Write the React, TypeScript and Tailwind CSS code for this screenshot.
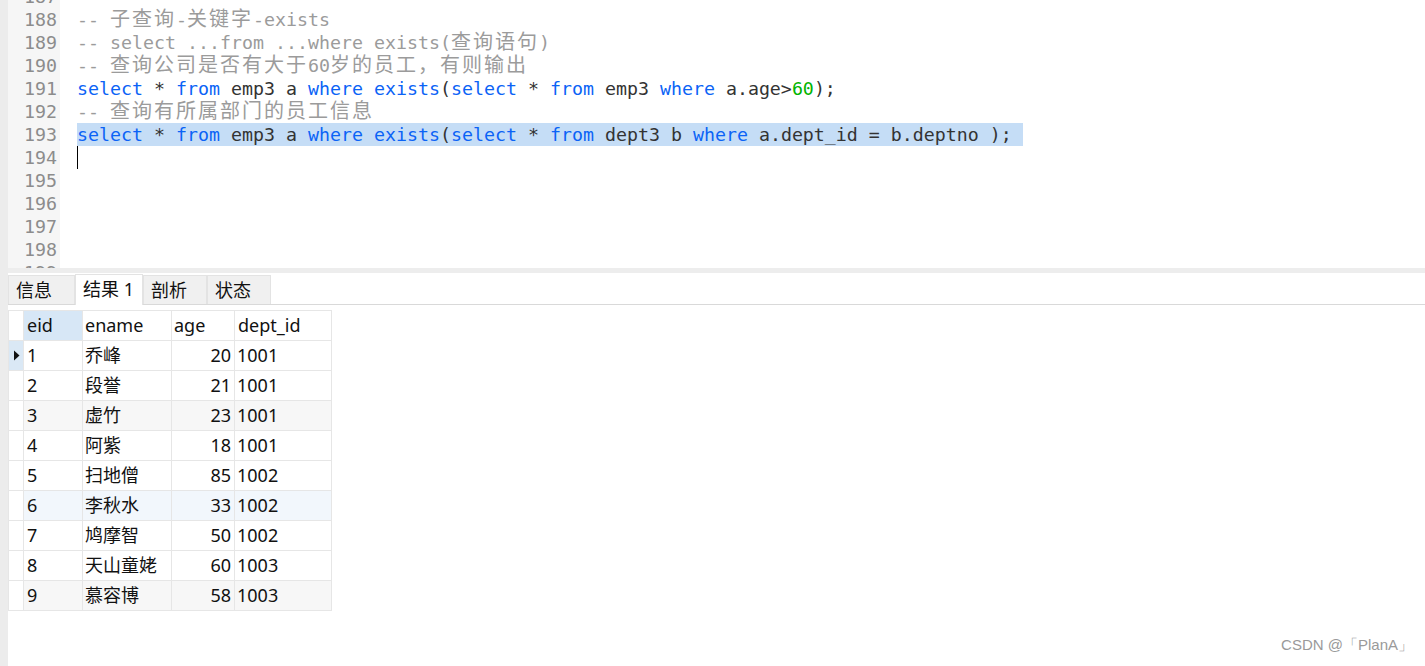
import React from "react";

type Tok = { t: string; c?: "kw" | "id" | "cm" | "num"; cjk?: boolean };

const color = {
  kw: "text-[#0b63f6]",
  id: "text-[#333333]",
  cm: "text-[#9b9b9b]",
  num: "text-[#00b400]",
};

// split a comment string into ascii / cjk pieces
function comment(s: string): Tok[] {
  const out: Tok[] = [];
  const re = /([\u3000-\u9fff\uff00-\uffef]+)|([^\u3000-\u9fff\uff00-\uffef]+)/g;
  let m;
  while ((m = re.exec(s))) {
    if (m[1]) out.push({ t: m[1], c: "cm", cjk: true });
    else out.push({ t: m[2], c: "cm" });
  }
  return out;
}

const lines: { n: number; toks: Tok[]; sel?: boolean }[] = [
  { n: 187, toks: [] },
  { n: 188, toks: comment("-- 子查询-关键字-exists") },
  { n: 189, toks: comment("-- select ...from ...where exists(查询语句)") },
  { n: 190, toks: comment("-- 查询公司是否有大于60岁的员工，有则输出") },
  {
    n: 191,
    toks: [
      { t: "select", c: "kw" },
      { t: " * ", c: "id" },
      { t: "from", c: "kw" },
      { t: " emp3 a ", c: "id" },
      { t: "where", c: "kw" },
      { t: " ", c: "id" },
      { t: "exists", c: "kw" },
      { t: "(", c: "id" },
      { t: "select", c: "kw" },
      { t: " * ", c: "id" },
      { t: "from", c: "kw" },
      { t: " emp3 ", c: "id" },
      { t: "where", c: "kw" },
      { t: " a.age>", c: "id" },
      { t: "60", c: "num" },
      { t: ");", c: "id" },
    ],
  },
  { n: 192, toks: comment("-- 查询有所属部门的员工信息") },
  {
    n: 193,
    sel: true,
    toks: [
      { t: "select", c: "kw" },
      { t: " * ", c: "id" },
      { t: "from", c: "kw" },
      { t: " emp3 a ", c: "id" },
      { t: "where", c: "kw" },
      { t: " ", c: "id" },
      { t: "exists", c: "kw" },
      { t: "(", c: "id" },
      { t: "select", c: "kw" },
      { t: " * ", c: "id" },
      { t: "from", c: "kw" },
      { t: " dept3 b ", c: "id" },
      { t: "where", c: "kw" },
      { t: " a.dept_id = b.deptno ); ", c: "id" },
    ],
  },
  { n: 194, toks: [] },
  { n: 195, toks: [] },
  { n: 196, toks: [] },
  { n: 197, toks: [] },
  { n: 198, toks: [] },
  { n: 199, toks: [] },
];

const rows = [
  ["1", "乔峰", "20", "1001"],
  ["2", "段誉", "21", "1001"],
  ["3", "虚竹", "23", "1001"],
  ["4", "阿紫", "18", "1001"],
  ["5", "扫地僧", "85", "1002"],
  ["6", "李秋水", "33", "1002"],
  ["7", "鸠摩智", "50", "1002"],
  ["8", "天山童姥", "60", "1003"],
  ["9", "慕容博", "58", "1003"],
];

const mono = "font-['DejaVu_Sans_Mono','Liberation_Mono',monospace] text-[18.27px]";
const ui = "font-['Noto_Sans','Noto_Sans_CJK_SC',sans-serif]";

function Editor() {
  return (
    <div className="h-[268px] overflow-hidden flex">
      <div className="w-[52px] shrink-0 bg-[#f6f6f6]">
        <div className="-mt-[15px]">
          {lines.map((l) => (
            <div
              key={l.n}
              className={`${mono} h-[23px] leading-[23px] text-right pr-[3px] text-[#8c8c8c]`}
            >
              {l.n}
            </div>
          ))}
        </div>
      </div>
      <div className="flex-1 bg-white pl-[17px]">
        <div className="-mt-[15px]">
          {lines.map((l) => (
            <div key={l.n} className={`${mono} h-[23px] leading-[23px] whitespace-pre flex items-center`}>
              <span className={`relative h-[23px] leading-[23px] ${l.sel ? "bg-[#c5ddf6]" : ""}`}>
                {l.toks.map((t, i) =>
                  t.cjk ? (
                    <span
                      key={i}
                      className={`${color.cm} font-['Noto_Sans_CJK_SC',sans-serif] text-[20px] leading-none tracking-[2px]`}
                    >
                      {t.t}
                    </span>
                  ) : (
                    <span key={i} className={color[t.c ?? "id"]}>
                      {t.t}
                    </span>
                  )
                )}
                {l.n === 194 && <span className="inline-block w-px h-[23px] bg-black align-top" />}
              </span>
            </div>
          ))}
        </div>
      </div>
    </div>
  );
}

function Tabs() {
  const tabs = ["信息", "结果 1", "剖析", "状态"];
  return (
    <div className="h-[32px] flex items-end border-b border-[#d9d9d9] bg-white">
      {tabs.map((t, i) =>
        i === 1 ? (
          <div
            key={t}
            className={`${ui} h-[31px] w-[68px] px-[7px] bg-white border-x border-t border-[#e3e3e3] text-[18px] leading-[28px] text-[#111] -mb-px`}
          >
            {t}
          </div>
        ) : (
          <div
            key={t}
            className={`${ui} h-[29px] ${i === 0 ? "w-[67px]" : "w-[64px]"} px-[7px] bg-[#f0f0f0] border-x border-t border-[#e3e3e3] text-[18px] leading-[28px] text-[#111]`}
          >
            {t}
          </div>
        )
      )}
    </div>
  );
}

function ResultTable() {
  const cell = "h-[30px] leading-[29px] border-r border-b border-[#e6e6e6] text-[18px] text-[#111]";
  return (
    <div className={`${ui} mt-[5px] w-[324px] border-t border-[#e6e6e6]`}>
      <div className="flex">
        <div className={`${cell} w-[16px] border-l`} />
        <div className={`${cell} w-[59px] pl-[3px] bg-[#d7e7f6]`}>eid</div>
        <div className={`${cell} w-[89px] pl-[2px]`}>ename</div>
        <div className={`${cell} w-[63px] pl-[2px]`}>age</div>
        <div className={`${cell} w-[97px] pl-[3px]`}>dept_id</div>
      </div>
      {rows.map((r, i) => {
        const bg = i === 5 ? "bg-[#f2f7fc]" : i % 3 === 2 ? "bg-[#f7f7f7]" : "bg-white";
        return (
          <div key={r[0]} className={`flex ${bg}`}>
            <div
              className={`${cell} w-[16px] border-l flex items-center justify-center ${
                i === 0 ? "bg-[#dae8f5]" : "bg-white"
              }`}
            >
              {i === 0 && (
                <svg width="7" height="11" viewBox="0 0 7 11">
                  <path d="M1 0.5 L6.5 5.5 L1 10.5 Z" fill="#111" />
                </svg>
              )}
            </div>
            <div className={`${cell} w-[59px] pl-[3px]`}>{r[0]}</div>
            <div className={`${cell} w-[89px] pl-[2px]`}>{r[1]}</div>
            <div className={`${cell} w-[63px] pr-[3px] text-right`}>{r[2]}</div>
            <div className={`${cell} w-[97px] pl-[2px]`}>{r[3]}</div>
          </div>
        );
      })}
    </div>
  );
}

export default function App() {
  return (
    <div className="relative w-full h-[666px] flex bg-white overflow-hidden">
      <div className="w-[8px] shrink-0 bg-[#ececec]" />
      <div className="flex-1 flex flex-col">
        <Editor />
        <div className="h-[5px] bg-[#ededed]" />
        <Tabs />
        <ResultTable />
      </div>
      <div className="absolute right-[12px] bottom-[10px] font-['Liberation_Sans',sans-serif] text-[15px] text-[#9a9a9a]">
        CSDN @「PlanA」
      </div>
    </div>
  );
}
